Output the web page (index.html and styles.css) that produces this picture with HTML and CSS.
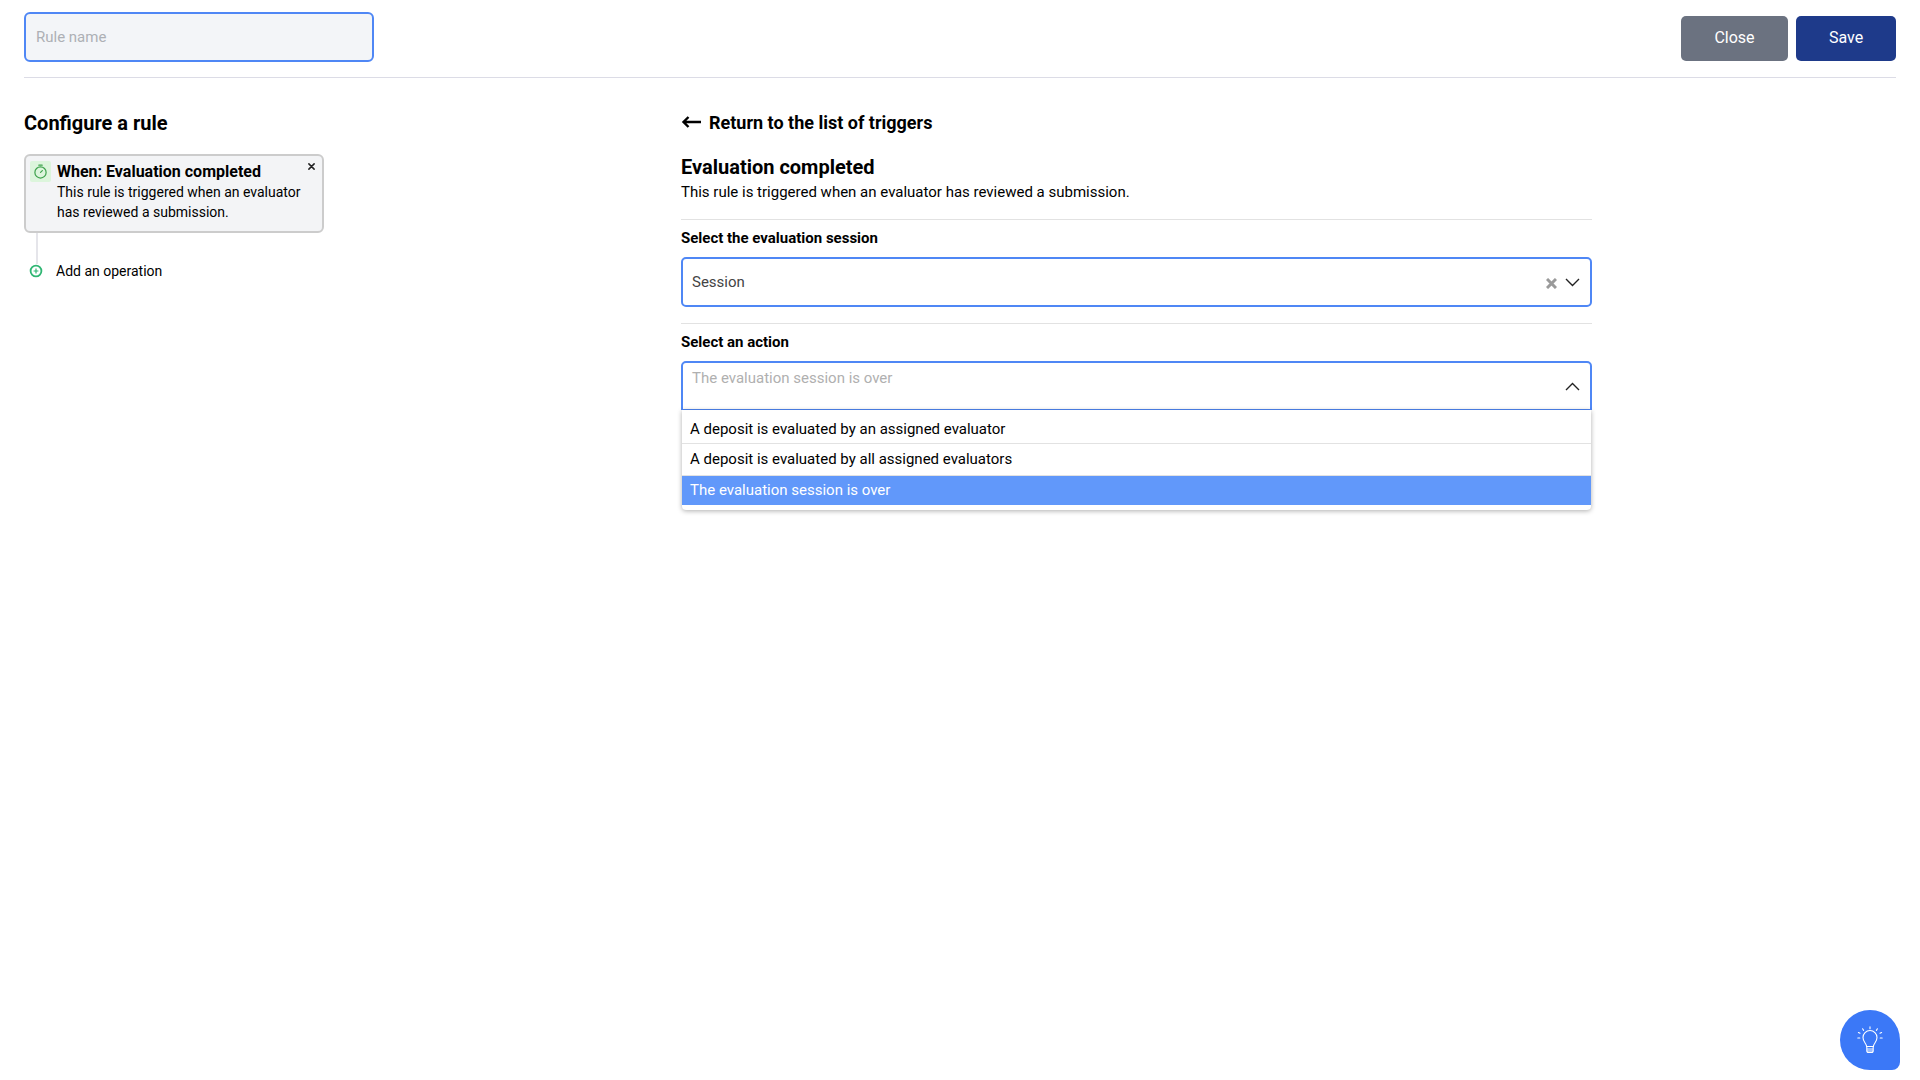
FILE: index.html
```html
<!DOCTYPE html>
<html lang="en">
<head>
  <meta charset="UTF-8">
  <title>Configure a rule</title>
  <link rel="stylesheet" href="styles.css">
</head>
<body>
  <header class="top-bar">
    <input class="rule-name" type="text" placeholder="Rule name">
    <div class="top-actions">
      <button class="btn btn-close">Close</button>
      <button class="btn btn-save">Save</button>
    </div>
  </header>

  <main class="content">
    <section class="rule-col">
      <h2 class="rule-title">Configure a rule</h2>
      <div class="trigger-card">
        <div class="trigger-icon">
          <svg width="15" height="15" viewBox="0 0 16 16" fill="none" stroke="#3fa34d" stroke-width="1.3" stroke-linecap="round">
            <circle cx="8" cy="9" r="6"/>
            <path d="M6.2 1.2h3.6M8 9l2-2"/>
          </svg>
        </div>
        <div class="trigger-text">
          <div class="trigger-name">When: Evaluation completed</div>
          <div class="trigger-desc">This rule is triggered when an evaluator has reviewed a submission.</div>
        </div>
        <svg class="trigger-remove" width="7" height="7" viewBox="0 0 8 8" stroke="#222" stroke-width="1.7" stroke-linecap="round">
          <path d="M1 1l6 6M7 1L1 7"/>
        </svg>
      </div>
      <div class="connector"></div>
      <div class="add-op">
        <svg width="14" height="14" viewBox="0 0 14 14" fill="none" stroke="#2fb673">
          <circle cx="7" cy="7" r="5.4" stroke-width="1.8"/>
          <path d="M7 4.600v4.800M4.600 7h4.800" stroke-width="1.2"/>
        </svg>
        <span>Add an operation</span>
      </div>
    </section>

    <section class="config-col">
      <div class="back-link">
        <svg width="20" height="14" viewBox="0 0 20 14" fill="none" stroke="#000" stroke-width="2.4">
          <path d="M20 7H2.500M7.500 2L2.500 7l5 5"/>
        </svg>
        <span>Return to the list of triggers</span>
      </div>
      <h2 class="config-title">Evaluation completed</h2>
      <p class="config-desc">This rule is triggered when an evaluator has reviewed a submission.</p>

      <div class="field field-session">
        <label class="field-label">Select the evaluation session</label>
        <div class="select">
          <span class="select-value">Session</span>
          <svg class="select-clear" width="11" height="11" viewBox="0 0 11 11" stroke="#9a9a9a" stroke-width="3">
            <path d="M1 1l9 9M10 1l-9 9"/>
          </svg>
          <svg width="15" height="9" viewBox="0 0 15 9" fill="none" stroke="#222" stroke-width="1.4">
            <path d="M1 1l6.500 6.500L14 1"/>
          </svg>
        </div>
      </div>

      <div class="field field-action">
        <label class="field-label">Select an action</label>
        <div class="select select-open">
          <span class="select-placeholder">The evaluation session is over</span>
          <svg width="15" height="9" viewBox="0 0 15 9" fill="none" stroke="#222" stroke-width="1.4">
            <path d="M1 8l6.500-6.500L14 8"/>
          </svg>
        </div>
        <ul class="menu">
          <li class="menu-item">A deposit is evaluated by an assigned evaluator</li>
          <li class="menu-item">A deposit is evaluated by all assigned evaluators</li>
          <li class="menu-item active">The evaluation session is over</li>
        </ul>
      </div>
    </section>
  </main>

  <button class="help-bubble">
    <svg width="26" height="28" viewBox="0 0 26 28" fill="none" stroke="#fff" stroke-width="1.1" stroke-linecap="round">
      <path d="M9.600 20.500c0-3-3.600-4.500-3.600-9a7 7 0 0 1 14 0c0 4.500-3.600 6-3.600 9z"/>
      <path d="M9.800 20.500v4.500a1.500 1.500 0 0 0 1.500 1.500h3.400a1.500 1.500 0 0 0 1.500-1.500v-4.500M9.800 23h6.400M9.800 25h6.400"/>
      <path d="M13 .8v2M5.600 2.800l1 1.600M20.400 2.800l-1 1.600M1.400 6.500l1.600.8M24.600 6.500l-1.600.8M.8 12h2M23.200 12h2"/>
    </svg>
  </button>
</body>
</html>
```
FILE: styles.css
```css
* { box-sizing: border-box; }
body { margin: 0; min-height: 100vh; background: #fff; color: #000; font-family: Roboto, "Liberation Sans", sans-serif; font-size: 14px; }

.top-bar { display: flex; justify-content: space-between; align-items: center; margin: 0 24px; padding: 12px 0 15px; border-bottom: 1px solid #dcdce6; }
.rule-name { width: 350px; height: 50px; padding: 0 10px; background: #f3f5f8; border: 2px solid #4f87f5; border-radius: 6px; font: 15px Roboto, sans-serif; outline: none; }
.rule-name::placeholder { color: #adb0b5; }
.top-actions { display: flex; gap: 8px; padding-top: 3px; }
.btn { height: 45px; padding: 0 0 2px; border: 0; border-radius: 5px; color: #fff; font: 400 16px Roboto, sans-serif; }
.btn-close { width: 107px; background: #6b7280; }
.btn-save { width: 100px; background: #1e3a8a; }

.content { display: flex; padding: 0 24px; }
.rule-col { width: 657px; padding-top: 32px; }
.rule-title { margin: 0 0 18px; font-size: 20px; line-height: 26px; font-weight: 700; }

.trigger-card { position: relative; display: flex; gap: 6px; width: 300px; height: 79px; padding: 5px 4px; background: #f3f4f6; border: 2px solid #ccc; border-radius: 6px; }
.trigger-icon { display: flex; flex: none; align-items: center; justify-content: center; width: 21px; height: 21px; background: #dcf5dc; border-radius: 2px; }
.trigger-text { width: 250px; }
.trigger-name { font-size: 16px; line-height: 21px; font-weight: 700; }
.trigger-desc { font-size: 14px; line-height: 20px; }
.trigger-remove { position: absolute; top: 7px; right: 7px; }

.connector { width: 2px; height: 31px; margin-left: 12px; background: #e5e5ea; }
.add-op { display: flex; align-items: center; gap: 13px; margin-left: 5px; line-height: 14px; }

.config-col { width: 911px; padding-top: 32px; }
.back-link { display: flex; align-items: center; gap: 8px; height: 24px; font-size: 18px; font-weight: 700; }
.config-title { margin: 20px 0 0; font-size: 20px; line-height: 26px; font-weight: 700; }
.config-desc { margin: 0; padding: 2px 0 17px; border-bottom: 1px solid #e2e2e2; font-size: 15px; line-height: 20px; }

.field { position: relative; }
.field-session { padding-bottom: 16px; border-bottom: 1px solid #e2e2e2; }
.field-label { display: block; padding: 9px 0 10px; font-size: 15px; line-height: 18px; font-weight: 700; }
.select { display: flex; align-items: center; height: 50px; padding: 0 10px 0 9px; background: #fff; border: 2px solid #4f87f5; border-radius: 5px; }
.select-value { flex: 1; color: #444; font-size: 15px; }
.select-clear { margin: 2px 8px 0 0; }
.select-open { height: 49px; border-bottom-width: 1px; border-radius: 5px 5px 0 0; }
.select-placeholder { flex: 1; align-self: flex-start; padding-top: 5px; color: #b0b0b0; font-size: 15px; line-height: 20px; }

.menu { margin: 0 1px; padding: 0 0 5px; list-style: none; background: #fff; border-radius: 0 0 4px 4px; box-shadow: 0 1px 5px rgba(0, 0, 0, 0.32); }
.menu-item { height: 32px; padding: 5px 8px 0; border-bottom: 1px solid #e2e2e2; font-size: 15px; line-height: 20px; }
.menu-item:first-child { height: 34px; padding-top: 9px; }
.menu-item.active { height: 29px; padding-top: 4px; border-bottom: 0; background: #6198fa; color: #fff; }

.help-bubble { position: fixed; right: 20px; bottom: 10px; display: flex; align-items: center; justify-content: center; width: 60px; height: 60px; padding: 0; background: #3b78f7; border: 0; border-radius: 50% 50% 8px 50%; }
```
